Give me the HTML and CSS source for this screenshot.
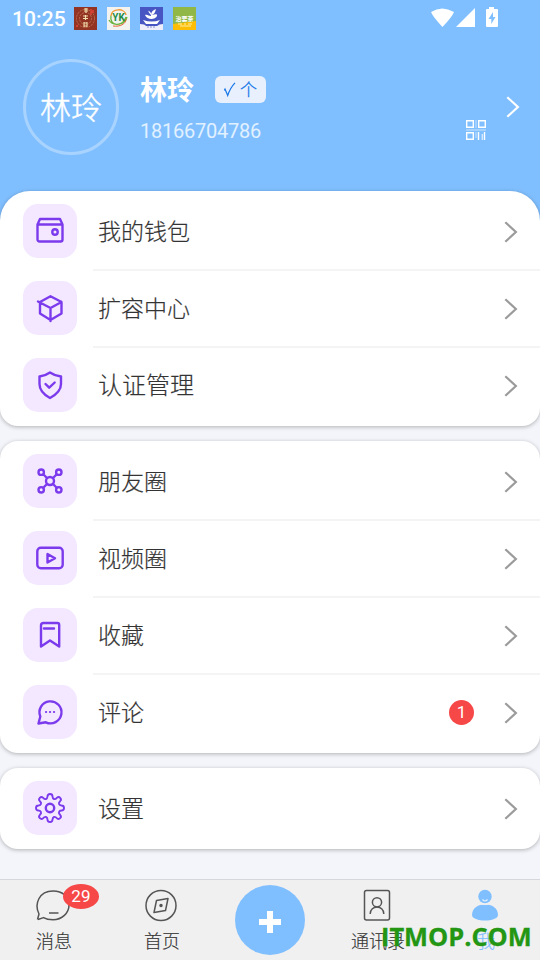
FILE: index.html
```html
<!DOCTYPE html>
<html lang="zh-CN">
<head>
<meta charset="utf-8">
<title>我</title>
<link rel="stylesheet" href="styles.css">
</head>
<body>
<svg class="defs" width="0" height="0" aria-hidden="true">
  <symbol id="chevron" viewBox="0 0 14 22"><path d="M1.300 1.200 11.900 11 1.300 20.800" fill="none" stroke="currentColor" stroke-width="2.200"/></symbol>
</svg>
<div class="app">
  <header class="profile">
    <div class="status">
      <span class="clock">10:25</span>
      <svg class="notice" viewBox="0 0 23 23"><path fill="#923323" d="M0 0h23v23H0z"/><g fill="none" stroke="#c77e55" stroke-width=".8" stroke-dasharray="2 1"><circle cx="11.5" cy="11.5" r="9"/><circle cx="11.5" cy="11.5" r="6"/></g><g stroke="#f2dfae" stroke-width="1.1" fill="none"><path d="M10 2h4M10 4h4M12 1v5M9 9h5M9 11.500h5M11.500 8v5M10 16h3M10 19h3M10 15v5M13 15v5"/></g><path d="M17 2v6M19 3v3M2 19h2" stroke="#ec4536" stroke-width="1.3"/></svg>
      <svg class="notice" viewBox="0 0 23 23"><path fill="#f2f3f1" d="M0 0h23v23H0z"/><path d="M4 9C4 1 18 1 19 8" fill="none" stroke="#f19a36" stroke-width="1.5"/><path d="M4 9c-2 10 11 12 15 1M2 13c4 7 16 5 18-3" fill="none" stroke="#69b33e" stroke-width="1.3"/><path d="M6 19c7 1 13-2 13-7" fill="none" stroke="#e76332"/><text x="11.5" y="14" font-size="10" text-anchor="middle" class="mini" fill="#258b45">YK</text></svg>
      <svg class="notice" viewBox="0 0 23 23"><path fill="#4856c3" d="M0 0h23v23H0z"/><path fill="#eeeefa" d="M0 17q5 0 6 2h11q2-2 6-2v6H0z"/><path fill="#fff" d="M11 6C7 1 8 5 11 8c0-3 2-5 5-6-1 4-2 5-4 6 3 0 5-2 5 1-2 4-10 4-12-1 2-1 4 1 6 1zM3 13q9 3 17 0l-3 4H6z"/><path d="M7 20h9" stroke="#8890cf" stroke-dasharray="2 1"/></svg>
      <svg class="notice" viewBox="0 0 23 23"><path fill="#91b847" d="M0 0h23v23H0z"/><path fill="#fdbd05" d="m0 17 23-3v9H0z"/><text x="11.5" y="13.5" font-size="6" text-anchor="middle" class="mini" fill="#fff">治要茶</text><path d="M5 17h4M11 17h2M15 17h4M7 19h11" stroke="#fff0a0" stroke-width="1.2"/></svg>
      <svg class="signals" viewBox="0 0 70 22" fill="#fff"><path d="M1 5Q12-2 24 5 22 10 12.500 20 3 10 1 5ZM26 20 45 1V20ZM59 2V0h5v2h3q1 0 1 1v16q0 1-1 1H57q-1 0-1-1V3q0-1 1-1z"/><path fill="#80bfff" d="M63 5 58.500 12H61.300V17L65.500 10H63z"/></svg>
    </div>
    <div class="person">
      <div class="avatar">林玲</div>
      <div class="identity">
        <div class="nameline"><span class="name">林玲</span><span class="tag"><svg viewBox="0 0 32 16" width="32" height="16" fill="none" stroke="#1677e8" stroke-width="1.2"><path d="M0 8.500 1 7 3.700 13.500Q6 6 11 .8"/></svg><b>个</b></span></div>
        <div class="phone">18166704786</div>
      </div>
      <svg class="qr" viewBox="0 0 20 20" fill="none" stroke="#fff" stroke-width="1.400"><path d="M.7.700h6.600v6.600H.7zM12.700.7h6.600v6.600h-6.600zM.7 12.700h6.600v6.600H.7zM12.500 12v8M18.500 12v8"/><path opacity=".4" d="M0 10h20M10 0v8M10 12v6"/><path opacity=".65" d="M16.300 14v6"/></svg>
      <svg class="chev light"><use href="#chevron"/></svg>
    </div>
  </header>

  <main class="groups">
    <section class="card first">
      <div class="row"><span class="tile"><svg viewBox="0 0 30 30"><path d="M2.500 8.500h25v15a2 2 0 0 1-2 2h-21a2 2 0 0 1-2-2zM2.500 8.500 5 3h20l2.500 5.500"/><circle cx="20" cy="16" r="2.700"/></svg></span><span class="label">我的钱包</span><svg class="chev"><use href="#chevron"/></svg></div>
      <div class="row"><span class="tile"><svg viewBox="0 0 30 30"><path d="M15.500 3.200 26.500 9v11.500L15.500 27 5 20.500V9zM3 8.500 15.500 15 26.500 9M15.500 15v13"/></svg></span><span class="label">扩容中心</span><svg class="chev"><use href="#chevron"/></svg></div>
      <div class="row"><span class="tile"><svg viewBox="0 0 30 30"><path d="M15 2.500Q20 6 26 6.500V14C26 21 20.500 25 15 28 9.500 25 4.500 21 4.500 14V6.500Q10 6 15 2.500ZM10.500 14l3.700 3.700 5.500-5.200"/></svg></span><span class="label wide">认证管理</span><svg class="chev"><use href="#chevron"/></svg></div>
    </section>

    <section class="card">
      <div class="row"><span class="tile"><svg viewBox="0 0 30 30"><circle cx="15" cy="15" r="4"/><circle cx="6.200" cy="6.200" r="2.700"/><circle cx="23.800" cy="6.200" r="2.700"/><circle cx="6.200" cy="23.800" r="2.700"/><circle cx="23.800" cy="23.800" r="2.700"/><path d="m8.500 8.500 3.500 3.500m6 6 3.500 3.500m0-13L18 12m-6 6-3.500 3.500"/></svg></span><span class="label">朋友圈</span><svg class="chev"><use href="#chevron"/></svg></div>
      <div class="row"><span class="tile"><svg viewBox="0 0 30 30"><rect x="2.300" y="4.700" width="25.400" height="20.600" rx="3.500"/><path d="M12.500 11v8.500l7.500-4.200z"/></svg></span><span class="label">视频圈</span><svg class="chev"><use href="#chevron"/></svg></div>
      <div class="row"><span class="tile"><svg viewBox="0 0 30 30"><path d="M6 26.500V5.500q0-2.500 2.500-2.500h14Q24.200 3 24.200 5v21.500L15 20.500zM9 8.500h10"/></svg></span><span class="label">收藏</span><svg class="chev"><use href="#chevron"/></svg></div>
      <div class="row"><span class="tile"><svg viewBox="0 0 30 30"><path d="M3.500 26.500 5.300 19.500A11 11 0 1 1 10.800 25.300Z"/><path class="dots" d="M11 15h.1M15 15h.1M19 15h.1"/></svg></span><span class="label">评论</span><span class="count">1</span><svg class="chev"><use href="#chevron"/></svg></div>
    </section>

    <section class="card">
      <div class="row"><span class="tile"><svg viewBox="0 0 30 30"><path class="thin" d="M12.500 3.500Q12.500 1 15 1T17.500 3.500Q17.600 5.500 19 6T21.800 4.900Q23.600 3.200 25.200 4.800T25.100 8.200Q23.500 9.700 24 11T26.500 12.500Q29 12.500 29 15T26.500 17.500Q24.500 17.600 24 19T25.100 21.800Q26.800 23.600 25.200 25.200T21.800 25.100Q20.300 23.500 19 24T17.500 26.500Q17.500 29 15 29T12.500 26.500Q12.400 24.500 11 24T8.200 25.100Q6.400 26.800 4.800 25.200T4.900 21.800Q6.500 20.300 6 19T3.500 17.500Q1 17.500 1 15T3.500 12.500Q5.500 12.400 6 11T4.900 8.200Q3.200 6.400 4.800 4.800T8.200 4.900Q9.700 6.500 11 6T12.500 3.500Z"/><circle cx="15" cy="15" r="4.200"/></svg></span><span class="label">设置</span><svg class="chev"><use href="#chevron"/></svg></div>
    </section>
  </main>

  <nav class="tabs">
    <a class="tab"><span class="tabicon"><svg viewBox="0 0 36 34"><path d="M2.500 30.500 4 25C-1 15 4 2 18 2 28 2 34 8 34 16S27 30.700 18 30.700Q12 30.700 8.500 28.600L3 30.500M14 24h9.500"/></svg><i class="bubble">29</i></span><span>消息</span></a>
    <a class="tab"><span class="tabicon"><svg viewBox="0 0 36 34"><circle cx="18" cy="16.500" r="15"/><path d="M13.500 11.500 25 9.500 22.500 21.500 11 23.500z"/><circle cx="18" cy="16.500" r="1" fill="#555"/></svg></span><span>首页</span></a>
    <a class="tab"><span class="add"><svg viewBox="0 0 22 22"><path d="M11 0v22M0 11h22"/></svg></span></a>
    <a class="tab"><span class="tabicon"><svg viewBox="0 0 36 34"><rect x="5.500" y="1.500" width="25" height="29.500" rx="2"/><circle cx="18" cy="13.300" r="4.600"/><path d="M11.200 25C11.200 15.700 24.800 15.700 24.800 25"/></svg></span><span>通讯录</span></a>
    <a class="tab active"><span class="tabicon"><svg viewBox="0 0 36 34"><circle cx="18" cy="7.500" r="6.700"/><path d="M5 26C5 11.500 31 11.500 31 26 31 33.300 5 33.300 5 26Z"/><path d="M11.500 14.800q6.500 1.800 13 0" fill="none" stroke="#f0f0f0" stroke-width="1"/><path d="M15.500 10.500q2.500 3 5 0" fill="none" stroke="#e3f0fb" stroke-width="1.200"/></svg></span><span>我</span></a>
    <div class="watermark">ITMOP.COM</div>
  </nav>
</div>
</body>
</html>
```
FILE: styles.css
```css
* { box-sizing: border-box; }
body {
  margin: 0;
  font-family: Roboto, "Noto Sans CJK SC", sans-serif;
  color: #333;
}
.defs { position: absolute; }
.app {
  display: flex;
  flex-direction: column;
  width: 540px;
  height: 960px;
  overflow: hidden;
  background: #f4f5fa;
}
.profile { flex: none; height: 221px; background: #80bfff; color: #fff; }
.status { display: flex; align-items: center; height: 36px; padding-left: 12px; }
.clock { width: 62px; font-size: 21px; font-weight: 500; letter-spacing: .1px; line-height: 36px; padding-top: 1px; }
.notice { width: 23px; height: 23px; margin-right: 10px; }
.mini { font-weight: 700; }
.signals { width: 70px; height: 22px; margin-left: auto; margin-right: 40px; }
.person { display: flex; align-items: flex-start; padding: 23px 0 0 23px; }
.avatar {
  width: 96px; height: 96px;
  border: 3px solid #a8d3ff;
  border-radius: 50%;
  font-size: 31px;
  line-height: 87px;
  text-align: center;
  font-weight: 300;
  font-family: "Noto Sans CJK SC", sans-serif;
  -webkit-text-stroke: .4px;
}
.identity { width: 325px; margin-left: 21px; padding-top: 12px; }
.nameline { display: flex; align-items: center; height: 37px; }
.name { width: 75px; font-size: 27px; font-weight: 700; line-height: 37px; padding-top: 4px; }
.tag {
  display: flex; align-items: center;
  width: 51px; height: 27px; padding-left: 9px;
  border-radius: 6px;
  background: #e8f0fe;
  color: #1677e8;
}
.tag svg { flex: none; width: 32px; margin-right: -16px; }
.tag b { font-size: 17px; font-weight: 300; line-height: 27px; padding-top: 1px; -webkit-text-stroke: .3px; }
.phone { margin-top: 11px; font-size: 20px; line-height: 24px; letter-spacing: -.25px; color: #e2f1ff; }
.qr { flex: none; width: 20px; height: 20px; margin: 61px 0 0 1px; }
.chev { flex: none; width: 14px; height: 22px; margin-top: 2px; color: #9b9b9b; }
.chev.light { margin: 37px 0 0 20px; color: #fff; }
.groups { display: flex; flex-direction: column; gap: 15px; margin-top: -30px; }
.card {
  padding: 1px 0 3px;
  border-radius: 18px;
  background: #fff;
  box-shadow: 0 1px 4px rgba(0, 0, 0, .28);
}
.card.first { border-radius: 30px 30px 18px 18px; }
.row { position: relative; display: flex; align-items: center; height: 77px; padding: 0 22px 0 23px; }
.row + .row::before {
  content: "";
  position: absolute;
  top: 0; left: 93px; right: 0;
  height: 2px;
  background: #f4f4f5;
}
.tile { display: flex; align-items: center; justify-content: center; width: 54px; height: 54px; border-radius: 15px; background: #f3e8ff; }
.tile svg { width: 30px; height: 30px; fill: none; stroke: #7c3aed; stroke-width: 2.4; stroke-linejoin: round; stroke-linecap: round; }
.tile .thin { stroke-width: 1.9; }
.tile .dots { stroke-width: 2.2; }
.label { flex: 1; margin-left: 21px; padding-bottom: 1px; font-family: "Noto Sans CJK SC", sans-serif; font-size: 23px; font-weight: 300; line-height: 34px; -webkit-text-stroke: .2px; }
.label.wide { padding-bottom: 2px; font-size: 24px; }
.count { width: 25px; height: 25px; margin: 1px 30px 0 0; border-radius: 50%; background: #f74848; color: #fff; font-size: 17px; line-height: 25px; text-align: center; }
.tabs {
  position: relative;
  display: grid;
  grid-template-columns: repeat(5, 1fr);
  height: 81px;
  margin-top: auto;
  border-top: 1px solid #d5d7da;
  background: #f0f0f0;
}
.tab { display: flex; flex-direction: column; align-items: center; font-family: "Noto Sans CJK SC", sans-serif; font-size: 18px; font-weight: 300; line-height: 26px; -webkit-text-stroke: .15px; }
.tabicon { position: relative; height: 38px; margin: 9px 2px 0 0; }
.tabicon svg { display: block; width: 36px; height: 34px; fill: none; stroke: #555; stroke-width: 1.5; stroke-linejoin: round; }
.bubble { position: absolute; left: 28px; top: -5px; width: 36px; height: 25px; border-radius: 50%; background: #f74848; color: #fff; font: 17px/25px Roboto, sans-serif; letter-spacing: .3px; text-align: center; -webkit-text-stroke: 0; }
.add { display: flex; align-items: center; justify-content: center; width: 70px; height: 70px; margin-top: 5px; border-radius: 50%; background: #80bfff; }
.add svg { width: 22px; height: 22px; margin-top: 4px; stroke: #fff; stroke-width: 6; }
.active { color: #80bfff; }
.active .tabicon svg { fill: #80bfff; stroke: none; }
.watermark {
  position: absolute;
  left: 381px; top: 39px;
  font: 700 25.4px/34px "Open Sans", sans-serif;
  color: #239614;
  white-space: nowrap;
  -webkit-text-stroke: .3px;
}
```
